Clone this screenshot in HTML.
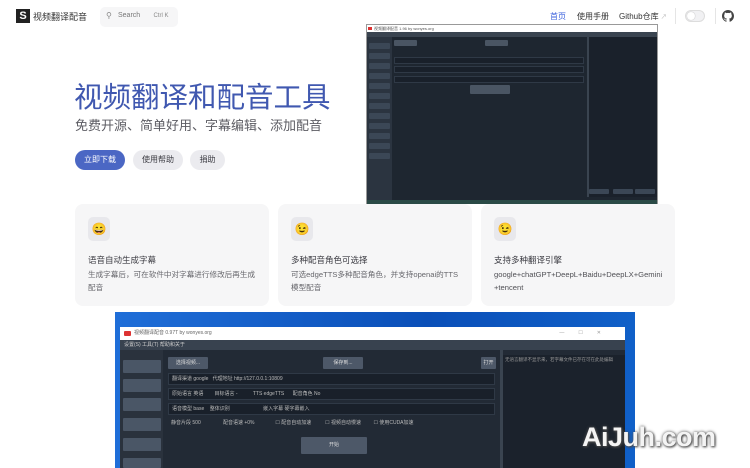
<!DOCTYPE html>
<html><head><meta charset="utf-8"><style>
*{margin:0;padding:0;box-sizing:border-box}
body{width:750px;height:468px;overflow:hidden;background:#fff;font-family:"Liberation Sans","Noto Sans CJK SC",sans-serif;position:relative;color:#3c3c43}
.a{position:absolute}
.btn{position:absolute;top:150px;height:20px;border-radius:10px;font-size:8px;line-height:20px;text-align:center}
.card{position:absolute;top:204px;width:194px;height:102px;background:#f6f6f7;border-radius:8px}
.card .ic{position:absolute;left:13px;top:13px;width:22px;height:24px;background:#e8e8ec;border-radius:5px;font-size:12px;line-height:24px;text-align:center}
.card .t{position:absolute;left:13px;top:50px;font-size:8.5px;color:#3c3c43}
.card .d{position:absolute;left:13px;top:64px;right:12px;font-size:7.6px;line-height:13px;color:#67676c;word-break:break-all}
.dk{position:absolute;background:#19202a;border:1px solid #2f3946}
.sb{position:absolute;background:#3b4756;border-radius:1px}
</style></head><body>
<!-- nav -->
<div class="a" style="left:16px;top:9px;width:14px;height:14px;background:#222;color:#fff;font-size:11px;font-weight:bold;line-height:14px;text-align:center">S</div>
<div class="a" style="left:33px;top:10px;font-size:9px;color:#333">视频翻译配音</div>
<div class="a" style="left:100px;top:7px;width:78px;height:20px;background:#f6f6f7;border-radius:5px"></div>
<div class="a" style="left:106px;top:11px;font-size:8px;color:#888">⚲</div>
<div class="a" style="left:118px;top:12px;font-size:7px;color:#777">Search</div>
<div class="a" style="left:150px;top:10px;width:22px;height:13px;border-radius:3px;font-size:6px;color:#888;line-height:13px;text-align:center">Ctrl K</div>
<div class="a" style="left:550px;top:11px;font-size:8px;color:#3e63dd">首页</div>
<div class="a" style="left:577px;top:11px;font-size:8px;color:#333">使用手册</div>
<div class="a" style="left:619px;top:11px;font-size:8px;color:#333">Github仓库 <span style="color:#aaa;font-size:6px">↗</span></div>
<div class="a" style="left:675px;top:8px;width:1px;height:16px;background:#e5e5e5"></div>
<div class="a" style="left:685px;top:10px;width:20px;height:12px;border-radius:6px;border:1px solid #ddd;background:#f1f1f3"><div style="margin:1px;width:8px;height:8px;border-radius:50%;background:#fff;box-shadow:0 0 1px #999"></div></div>
<div class="a" style="left:715px;top:8px;width:1px;height:16px;background:#e5e5e5"></div>
<svg class="a" style="left:722px;top:10px" width="12" height="12" viewBox="0 0 16 16"><path fill="#444" d="M8 0C3.6 0 0 3.6 0 8c0 3.5 2.300 6.5 5.5 7.6.4.1.5-.2.5-.4v-1.4c-2.2.5-2.700-1-2.700-1-.4-.9-.9-1.200-.9-1.200-.7-.5.1-.5.1-.5.8.1 1.200.8 1.200.8.7 1.200 1.900.9 2.300.7.1-.5.3-.9.5-1.100-1.800-.2-3.600-.9-3.600-4 0-.9.3-1.600.8-2.100-.1-.2-.4-1 .1-2.100 0 0 .7-.2 2.200.8a7.4 7.4 0 0 1 4 0c1.500-1 2.200-.8 2.200-.8.4 1.100.2 1.900.1 2.100.5.6.8 1.300.8 2.100 0 3.100-1.900 3.800-3.600 4 .3.3.6.8.6 1.500v2.200c0 .2.1.5.6.4A8 8 0 0 0 16 8c0-4.400-3.600-8-8-8z"/></svg>
<!-- hero -->
<div class="a" style="left:74px;top:75px;font-size:28.5px;color:#4058b0">视频翻译和配音工具</div>
<div class="a" style="left:75px;top:115px;font-size:13px;color:#5c5c63">免费开源、简单好用、字幕编辑、添加配音</div>
<div class="btn" style="left:75px;width:50px;background:#4b67c4;color:#fff">立即下载</div>
<div class="btn" style="left:133px;width:50px;background:#ebebef;color:#3c3c43">使用帮助</div>
<div class="btn" style="left:190px;width:35px;background:#ebebef;color:#3c3c43">捐助</div>
<!-- top screenshot -->
<div class="a" style="left:366px;top:24px;width:292px;height:180px;background:#1e2630;border:1px solid #999">
 <div class="a" style="left:0;top:0;width:290px;height:7px;background:#fff;font-size:4px;color:#555;padding-left:7px;line-height:7px"><span style="position:absolute;left:1px;top:2px;width:4px;height:3px;background:#d33"></span>视频翻译配音 1.96 by wonyes.org</div>
 <div class="a" style="left:0;top:7px;width:290px;height:5px;background:#3a4450"></div>
 <div class="a" style="left:0;top:12px;width:25px;height:167px;background:#2b3440"></div>
 <div class="sb" style="left:2px;top:18px;width:21px;height:6px"></div><div class="sb" style="left:2px;top:28px;width:21px;height:6px"></div><div class="sb" style="left:2px;top:38px;width:21px;height:6px"></div><div class="sb" style="left:2px;top:48px;width:21px;height:6px"></div><div class="sb" style="left:2px;top:58px;width:21px;height:6px"></div><div class="sb" style="left:2px;top:68px;width:21px;height:6px"></div><div class="sb" style="left:2px;top:78px;width:21px;height:6px"></div><div class="sb" style="left:2px;top:88px;width:21px;height:6px"></div><div class="sb" style="left:2px;top:98px;width:21px;height:6px"></div><div class="sb" style="left:2px;top:108px;width:21px;height:6px"></div><div class="sb" style="left:2px;top:118px;width:21px;height:6px"></div><div class="sb" style="left:2px;top:128px;width:21px;height:6px"></div>
 <div class="sb" style="left:27px;top:15px;width:23px;height:6px;background:#4a5563"></div>
 <div class="sb" style="left:118px;top:15px;width:23px;height:6px;background:#4a5563"></div>
 <div class="dk" style="left:27px;top:32px;width:190px;height:7px"></div>
 <div class="dk" style="left:27px;top:41px;width:190px;height:7px"></div>
 <div class="dk" style="left:27px;top:51px;width:190px;height:7px"></div>
 <div class="sb" style="left:103px;top:60px;width:40px;height:9px;background:#4a5563"></div>
 <div class="a" style="left:220px;top:12px;width:70px;height:160px;background:#1a212b;border-left:2px solid #3a4450"></div>
 <div class="sb" style="left:222px;top:164px;width:20px;height:5px"></div><div class="sb" style="left:246px;top:164px;width:20px;height:5px"></div><div class="sb" style="left:268px;top:164px;width:20px;height:5px"></div>
 <div class="a" style="left:0;top:175px;width:290px;height:4px;background:#2a4a46"></div>
</div>
<!-- cards -->
<div class="card" style="left:75px"><div class="ic">😄</div><div class="t">语音自动生成字幕</div><div class="d">生成字幕后，可在软件中对字幕进行修改后再生成配音</div></div>
<div class="card" style="left:278px"><div class="ic">😉</div><div class="t">多种配音角色可选择</div><div class="d">可选edgeTTS多种配音角色，并支持openai的TTS模型配音</div></div>
<div class="card" style="left:481px"><div class="ic">😉</div><div class="t">支持多种翻译引擎</div><div class="d" style="color:#505055">google+chatGPT+DeepL+Baidu+DeepLX+Gemini+tencent</div></div>
<!-- bottom screenshot -->
<div class="a" style="left:115px;top:312px;width:520px;height:156px;background:linear-gradient(90deg,#1f6ed8,#0a4fb8 60%,#1060c8)">
 <div class="a" style="left:5px;top:15px;width:505px;height:141px;background:#222a35">
  <div class="a" style="left:0;top:0;width:505px;height:13px;background:#fff;font-size:5px;color:#666;line-height:13px;padding-left:14px"><span style="position:absolute;left:4px;top:4px;width:7px;height:5px;background:#d33;border-radius:1px"></span>视频翻译配音 0.97T by wonyes.org<span style="position:absolute;right:10px;color:#999;letter-spacing:14px">—☐✕</span></div>
  <div class="a" style="left:0;top:13px;width:505px;height:10px;background:#38424f;font-size:5px;color:#ccc;line-height:10px;padding-left:4px">设置(S) 工具(T) 帮助和关于</div>
  <div class="a" style="left:0;top:23px;width:43px;height:118px;background:#2a323d"></div>
  <div class="sb" style="left:3px;top:33px;width:38px;height:13px;background:#4a5666"></div>
  <div class="sb" style="left:3px;top:52px;width:38px;height:13px;background:#4a5666"></div>
  <div class="sb" style="left:3px;top:71px;width:38px;height:13px;background:#4a5666"></div>
  <div class="sb" style="left:3px;top:91px;width:38px;height:13px;background:#4a5666"></div>
  <div class="sb" style="left:3px;top:111px;width:38px;height:13px;background:#4a5666"></div>
  <div class="sb" style="left:3px;top:131px;width:38px;height:10px;background:#4a5666"></div>
  <div class="sb" style="left:48px;top:30px;width:40px;height:12px;background:#4d5868;font-size:5px;color:#ddd;line-height:12px;text-align:center">选择视频...</div>
  <div class="sb" style="left:203px;top:30px;width:40px;height:12px;background:#4d5868;font-size:5px;color:#ddd;line-height:12px;text-align:center">保存到...</div>
  <div class="sb" style="left:361px;top:30px;width:15px;height:12px;background:#4d5868;font-size:5px;color:#ddd;line-height:12px;text-align:center">打开</div>
  <div class="dk" style="left:48px;top:46px;width:327px;height:12px;font-size:5px;color:#bbb;line-height:10px;padding-left:3px">翻译渠道 google &nbsp; 代理地址 http://127.0.0.1:10809</div>
  <div class="dk" style="left:48px;top:61px;width:327px;height:12px;font-size:5px;color:#bbb;line-height:10px;padding-left:3px">原始语言 英语 &nbsp;&nbsp;&nbsp;&nbsp;&nbsp;&nbsp; 目标语言 - &nbsp;&nbsp;&nbsp;&nbsp;&nbsp;&nbsp;&nbsp;&nbsp;&nbsp; TTS edgeTTS &nbsp;&nbsp;&nbsp;&nbsp; 配音角色 No</div>
  <div class="dk" style="left:48px;top:76px;width:327px;height:12px;font-size:5px;color:#bbb;line-height:10px;padding-left:3px">语音模型 base &nbsp;&nbsp; 整体识别 &nbsp;&nbsp;&nbsp;&nbsp;&nbsp;&nbsp;&nbsp;&nbsp;&nbsp;&nbsp;&nbsp;&nbsp;&nbsp;&nbsp;&nbsp;&nbsp;&nbsp;&nbsp;&nbsp;&nbsp;&nbsp;&nbsp; 嵌入字幕 硬字幕嵌入</div>
  <div class="a" style="left:51px;top:92px;font-size:5px;color:#bbb">静音片段 500 &nbsp;&nbsp;&nbsp;&nbsp;&nbsp;&nbsp;&nbsp;&nbsp;&nbsp;&nbsp;&nbsp;&nbsp;&nbsp;&nbsp; 配音语速 +0% &nbsp;&nbsp;&nbsp;&nbsp;&nbsp;&nbsp;&nbsp;&nbsp;&nbsp;&nbsp;&nbsp;&nbsp;&nbsp; ☐ 配音自动加速 &nbsp;&nbsp;&nbsp;&nbsp;&nbsp;&nbsp;&nbsp;&nbsp; ☐ 视频自动慢速 &nbsp;&nbsp;&nbsp;&nbsp;&nbsp;&nbsp;&nbsp; ☐ 使用CUDA加速</div>
  <div class="sb" style="left:181px;top:110px;width:66px;height:17px;background:#4d5868;font-size:5px;color:#ddd;line-height:17px;text-align:center">开始</div>
  <div class="a" style="left:380px;top:23px;width:3px;height:118px;background:#3a4450"></div>
  <div class="a" style="left:383px;top:28px;width:122px;height:113px;background:#1b222c;font-size:4.5px;color:#999;padding:2px">无语言翻译不显示来，若字幕文件已存在可在此处编辑</div>
 </div>
</div>
<div class="a" style="left:582px;top:422px;font-size:27px;font-weight:bold;color:#f4f4f4;text-shadow:0 0 3px #555,1px 1px 2px #444;letter-spacing:-0.5px">AiJuh.com</div>
</body></html>
